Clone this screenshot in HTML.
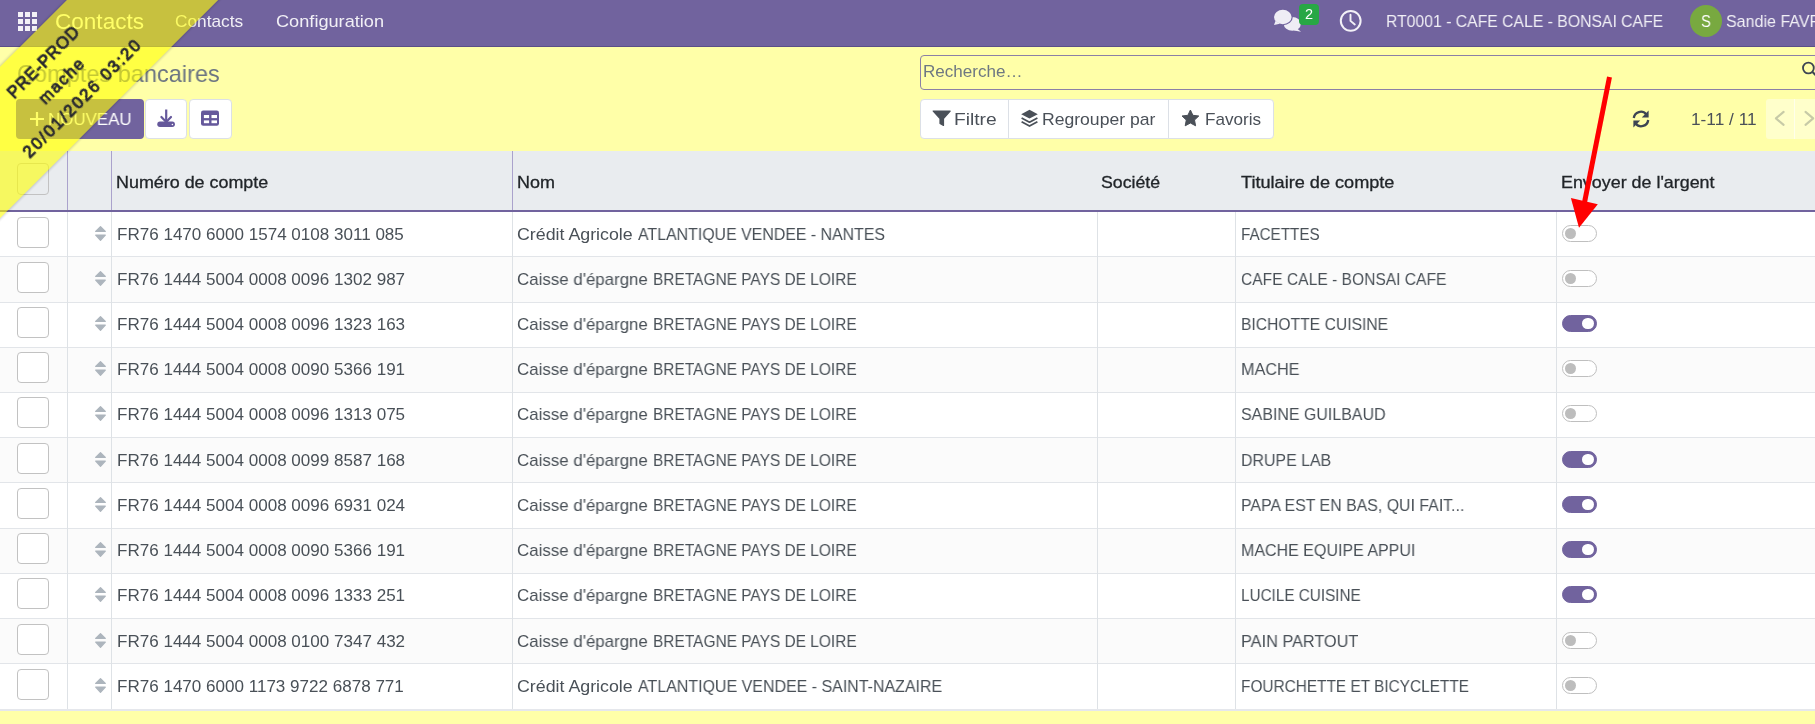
<!DOCTYPE html>
<html><head><meta charset="utf-8">
<style>
html,body{margin:0;padding:0}
body{width:1815px;height:724px;overflow:hidden;position:relative;background:#ffffa8;font-family:"Liberation Sans",sans-serif}
.abs{position:absolute}
.t{position:absolute;white-space:nowrap;line-height:1;transform-origin:0 0;will-change:transform}
.cb{position:absolute;width:30px;height:29.5px;border:1px solid #c2c2c2;border-radius:4px;background:#fff}
.tg{position:absolute;width:32.5px;height:15.5px;border:1px solid #bfbfbf;border-radius:9px;background:#fff}
.tg .kn{position:absolute;left:2.1px;top:2.15px;width:11.2px;height:11.2px;border-radius:50%;background:#bdbdbd}
.tg.on{background:#71639e;border-color:#71639e}
.tg.on .kn{left:auto;right:2px;background:#fff}
</style></head><body>
<!-- NAVBAR -->
<div class="abs" style="left:0;top:0;width:1815px;height:46px;background:#71639e;border-bottom:1px solid #5b4f88"></div>
<svg class="abs" style="left:18px;top:12px" width="19" height="19" viewBox="0 0 19 19" fill="#f3f1f7">
<rect x="0" y="0" width="5" height="5"/><rect x="7" y="0" width="5" height="5"/><rect x="14" y="0" width="5" height="5"/>
<rect x="0" y="7" width="5" height="5"/><rect x="7" y="7" width="5" height="5"/><rect x="14" y="7" width="5" height="5"/>
<rect x="0" y="14" width="5" height="5"/><rect x="7" y="14" width="5" height="5"/><rect x="14" y="14" width="5" height="5"/>
</svg>
<!-- chat icon -->
<svg class="abs" style="left:1272px;top:8px" width="32" height="26" viewBox="0 0 32 26">
<ellipse cx="20.3" cy="15.9" rx="8.5" ry="6.9" fill="#efedf5"/>
<path d="M24.5 20 L29 23.8 L22 22.6 Z" fill="#efedf5"/>
<ellipse cx="10.8" cy="9" rx="10" ry="8.3" fill="#71639e"/>
<path d="M2.6 12 L0.8 17.6 L8.5 17 Z" fill="#71639e"/>
<ellipse cx="10.8" cy="9" rx="8.8" ry="7.2" fill="#efedf5"/>
<path d="M3.6 12.8 L2 16.9 L7.8 15.8 Z" fill="#efedf5"/>
</svg>
<div class="abs" style="left:1299px;top:4px;width:20px;height:21px;background:#28a745;border-radius:4px"></div>
<!-- clock -->
<svg class="abs" style="left:1339px;top:9px" width="24" height="24" viewBox="0 0 24 24">
<circle cx="11.7" cy="11.85" r="9.9" fill="none" stroke="#f3f1f7" stroke-width="2"/>
<path d="M11.5 5.7 V11.9 L15.8 15.5" fill="none" stroke="#f3f1f7" stroke-width="1.9" stroke-linecap="round"/>
</svg>
<!-- avatar -->
<div class="abs" style="left:1690px;top:4.8px;width:32px;height:32px;border-radius:50%;background:#78a940"></div>

<!-- CONTROL PANEL -->
<div class="abs" style="left:920px;top:55px;width:1000px;height:33px;border:1px solid #8b80a6;border-radius:4px"></div>
<svg class="abs" style="left:1800px;top:59px" width="20" height="20" viewBox="0 0 20 20">
<circle cx="8.4" cy="9" r="5.4" fill="none" stroke="#3d4553" stroke-width="1.8"/>
<path d="M12.5 13 L17 17.5" stroke="#3d4553" stroke-width="2"/>
</svg>
<div class="abs" style="left:16.2px;top:99px;width:128px;height:39.6px;background:#71639e;border-radius:4px"></div>
<svg class="abs" style="left:29px;top:111px" width="16" height="16" viewBox="0 0 16 16">
<path d="M8 1 V15 M1 8 H15" stroke="#fff" stroke-width="2.2"/>
</svg>
<div class="abs" style="left:144.6px;top:99px;width:40.8px;height:37.6px;background:#fff;border:1px solid #dce0e6;border-radius:4px"></div>
<div class="abs" style="left:188.5px;top:99px;width:41.5px;height:37.5px;background:#fff;border:1px solid #dce0e6;border-radius:4px"></div>
<svg class="abs" style="left:156px;top:108px" width="20" height="20" viewBox="0 0 20 20">
<path d="M10.2 1.5 V14" stroke="#65589b" stroke-width="2.2"/>
<path d="M5.4 9 L10.2 14 L15 9" fill="none" stroke="#65589b" stroke-width="2.2" stroke-linecap="round"/>
<rect x="1.3" y="13.6" width="17.6" height="5.3" rx="2.6" fill="#65589b"/>
<circle cx="16.4" cy="16.5" r="0.8" fill="#fff"/>
</svg>
<svg class="abs" style="left:200px;top:110px" width="20" height="17" viewBox="0 0 20 17">
<rect x="1" y="0.5" width="18" height="15.2" rx="2.2" fill="#65589b"/>
<rect x="3.9" y="5" width="5.2" height="3.1" fill="#fff"/><rect x="11.5" y="5" width="5.5" height="3.1" fill="#fff"/>
<rect x="3.9" y="10.4" width="5.2" height="2.8" fill="#fff"/><rect x="11.5" y="10.4" width="5.5" height="2.8" fill="#fff"/>
</svg>
<!-- search options group -->
<div class="abs" style="left:920px;top:99px;width:351.5px;height:37.5px;background:#fff;border:1px solid #dce0e6;border-radius:4px"></div>
<div class="abs" style="left:1008px;top:100px;width:1px;height:38px;background:#dce0e6"></div>
<div class="abs" style="left:1168px;top:100px;width:1px;height:38px;background:#dce0e6"></div>
<svg class="abs" style="left:932px;top:110px" width="20" height="17" viewBox="0 0 20 17">
<path d="M1.2 1 H18.2 L11.5 8.5 V15.5 L8 13.4 V8.5 Z" fill="#4a5058" stroke="#4a5058" stroke-width="1.2" stroke-linejoin="round"/>
</svg>
<svg class="abs" style="left:1020px;top:109px" width="20" height="20" viewBox="0 0 20 20">
<path d="M9.5 0.8 L17.8 5.2 L9.5 9.6 L1.2 5.2 Z" fill="#4a5058"/>
<path d="M1.6 9 L9.5 13.2 L17.4 9" fill="none" stroke="#4a5058" stroke-width="1.8" stroke-linejoin="round"/>
<path d="M1.6 12.8 L9.5 17 L17.4 12.8" fill="none" stroke="#4a5058" stroke-width="1.8" stroke-linejoin="round"/>
</svg>
<svg class="abs" style="left:1181px;top:109px" width="20" height="19" viewBox="0 0 20 19">
<path d="M9.4 1 L11.9 6.3 L17.8 7 L13.5 11 L14.6 16.8 L9.4 14 L4.2 16.8 L5.3 11 L1 7 L6.9 6.3 Z" fill="#4a5058" stroke="#4a5058" stroke-width="1" stroke-linejoin="round"/>
</svg>
<!-- refresh -->
<svg class="abs" style="left:1630px;top:109px" width="22" height="20" viewBox="0 0 22 20">
<path d="M3.8 9 A7 7 0 0 1 16.3 5.5" fill="none" stroke="#3d4553" stroke-width="2.3"/>
<path d="M18.6 1.6 V8.4 H11.8 Z" fill="#3d4553"/>
<path d="M18.2 11 A7 7 0 0 1 5.7 14.5" fill="none" stroke="#3d4553" stroke-width="2.3"/>
<path d="M3.4 18.4 V11.6 H10.2 Z" fill="#3d4553"/>
</svg>
<div class="abs" style="left:1766.2px;top:99px;width:60px;height:39.5px;background:rgba(255,255,255,0.4);border-radius:3px"></div>
<div class="abs" style="left:1794px;top:99px;width:1px;height:39.5px;background:rgba(255,255,255,0.6)"></div>
<svg class="abs" style="left:0;top:0" width="1815" height="140">
<path d="M1783.6 111.9 L1775.9 118.4 L1783.6 124.9" fill="none" stroke="#c7caa7" stroke-width="2.1" stroke-linecap="round" stroke-linejoin="round"/>
<path d="M1805.5 111.9 L1813.2 118.4 L1805.5 124.9" fill="none" stroke="#c7caa7" stroke-width="2.1" stroke-linecap="round" stroke-linejoin="round"/>
</svg>

<!-- TABLE HEADER -->
<div class="abs" style="left:0;top:151px;width:1815px;height:59px;background:#e9ecef"></div>
<div class="abs" style="left:0;top:210px;width:1815px;height:2px;background:#71639e"></div>
<div class="abs" style="left:67px;top:151px;width:1px;height:59px;background:#aaa2cc"></div>
<div class="abs" style="left:111px;top:151px;width:1px;height:59px;background:#aaa2cc"></div>
<div class="abs" style="left:512px;top:151px;width:1px;height:59px;background:#aaa2cc"></div>
<div class="abs" style="left:17px;top:163.3px;width:30px;height:29.5px;border:1px solid #c2c2c2;border-radius:4px;background:#e9ecef"></div>
<div class="abs" style="left:0;top:212px;width:1815px;height:44px;background:#ffffff"></div>
<div class="abs" style="left:0;top:256px;width:1815px;height:1px;background:#e2e5e9"></div>
<div class="cb" style="left:17px;top:216.65px"></div>
<svg class="abs" style="left:94px;top:224.7px" width="13" height="17" viewBox="0 0 13 17"><path d="M6.5 1.6 L11.3 6.4 H1.7 Z M6.5 15.2 L11.3 10.1 H1.7 Z" fill="#adb5bd" stroke="#adb5bd" stroke-width="1.3" stroke-linejoin="round"/></svg>
<div class="tg" style="left:1562px;top:224.5px"><div class="kn"></div></div>
<div class="abs" style="left:0;top:257px;width:1815px;height:45px;background:#fbfbfb"></div>
<div class="abs" style="left:0;top:302px;width:1815px;height:1px;background:#e2e5e9"></div>
<div class="cb" style="left:17px;top:261.65px"></div>
<svg class="abs" style="left:94px;top:269.7px" width="13" height="17" viewBox="0 0 13 17"><path d="M6.5 1.6 L11.3 6.4 H1.7 Z M6.5 15.2 L11.3 10.1 H1.7 Z" fill="#adb5bd" stroke="#adb5bd" stroke-width="1.3" stroke-linejoin="round"/></svg>
<div class="tg" style="left:1562px;top:269.5px"><div class="kn"></div></div>
<div class="abs" style="left:0;top:303px;width:1815px;height:44px;background:#ffffff"></div>
<div class="abs" style="left:0;top:347px;width:1815px;height:1px;background:#e2e5e9"></div>
<div class="cb" style="left:17px;top:306.65px"></div>
<svg class="abs" style="left:94px;top:314.7px" width="13" height="17" viewBox="0 0 13 17"><path d="M6.5 1.6 L11.3 6.4 H1.7 Z M6.5 15.2 L11.3 10.1 H1.7 Z" fill="#adb5bd" stroke="#adb5bd" stroke-width="1.3" stroke-linejoin="round"/></svg>
<div class="tg on" style="left:1562px;top:314.5px"><div class="kn"></div></div>
<div class="abs" style="left:0;top:348px;width:1815px;height:44px;background:#fbfbfb"></div>
<div class="abs" style="left:0;top:392px;width:1815px;height:1px;background:#e2e5e9"></div>
<div class="cb" style="left:17px;top:351.65px"></div>
<svg class="abs" style="left:94px;top:359.7px" width="13" height="17" viewBox="0 0 13 17"><path d="M6.5 1.6 L11.3 6.4 H1.7 Z M6.5 15.2 L11.3 10.1 H1.7 Z" fill="#adb5bd" stroke="#adb5bd" stroke-width="1.3" stroke-linejoin="round"/></svg>
<div class="tg" style="left:1562px;top:359.5px"><div class="kn"></div></div>
<div class="abs" style="left:0;top:393px;width:1815px;height:44px;background:#ffffff"></div>
<div class="abs" style="left:0;top:437px;width:1815px;height:1px;background:#e2e5e9"></div>
<div class="cb" style="left:17px;top:396.65px"></div>
<svg class="abs" style="left:94px;top:404.7px" width="13" height="17" viewBox="0 0 13 17"><path d="M6.5 1.6 L11.3 6.4 H1.7 Z M6.5 15.2 L11.3 10.1 H1.7 Z" fill="#adb5bd" stroke="#adb5bd" stroke-width="1.3" stroke-linejoin="round"/></svg>
<div class="tg" style="left:1562px;top:404.5px"><div class="kn"></div></div>
<div class="abs" style="left:0;top:438px;width:1815px;height:44px;background:#fbfbfb"></div>
<div class="abs" style="left:0;top:482px;width:1815px;height:1px;background:#e2e5e9"></div>
<div class="cb" style="left:17px;top:442.65px"></div>
<svg class="abs" style="left:94px;top:450.7px" width="13" height="17" viewBox="0 0 13 17"><path d="M6.5 1.6 L11.3 6.4 H1.7 Z M6.5 15.2 L11.3 10.1 H1.7 Z" fill="#adb5bd" stroke="#adb5bd" stroke-width="1.3" stroke-linejoin="round"/></svg>
<div class="tg on" style="left:1562px;top:450.5px"><div class="kn"></div></div>
<div class="abs" style="left:0;top:483px;width:1815px;height:45px;background:#ffffff"></div>
<div class="abs" style="left:0;top:528px;width:1815px;height:1px;background:#e2e5e9"></div>
<div class="cb" style="left:17px;top:487.65px"></div>
<svg class="abs" style="left:94px;top:495.7px" width="13" height="17" viewBox="0 0 13 17"><path d="M6.5 1.6 L11.3 6.4 H1.7 Z M6.5 15.2 L11.3 10.1 H1.7 Z" fill="#adb5bd" stroke="#adb5bd" stroke-width="1.3" stroke-linejoin="round"/></svg>
<div class="tg on" style="left:1562px;top:495.5px"><div class="kn"></div></div>
<div class="abs" style="left:0;top:529px;width:1815px;height:44px;background:#fbfbfb"></div>
<div class="abs" style="left:0;top:573px;width:1815px;height:1px;background:#e2e5e9"></div>
<div class="cb" style="left:17px;top:532.65px"></div>
<svg class="abs" style="left:94px;top:540.7px" width="13" height="17" viewBox="0 0 13 17"><path d="M6.5 1.6 L11.3 6.4 H1.7 Z M6.5 15.2 L11.3 10.1 H1.7 Z" fill="#adb5bd" stroke="#adb5bd" stroke-width="1.3" stroke-linejoin="round"/></svg>
<div class="tg on" style="left:1562px;top:540.5px"><div class="kn"></div></div>
<div class="abs" style="left:0;top:574px;width:1815px;height:44px;background:#ffffff"></div>
<div class="abs" style="left:0;top:618px;width:1815px;height:1px;background:#e2e5e9"></div>
<div class="cb" style="left:17px;top:577.65px"></div>
<svg class="abs" style="left:94px;top:585.7px" width="13" height="17" viewBox="0 0 13 17"><path d="M6.5 1.6 L11.3 6.4 H1.7 Z M6.5 15.2 L11.3 10.1 H1.7 Z" fill="#adb5bd" stroke="#adb5bd" stroke-width="1.3" stroke-linejoin="round"/></svg>
<div class="tg on" style="left:1562px;top:585.5px"><div class="kn"></div></div>
<div class="abs" style="left:0;top:619px;width:1815px;height:44px;background:#fbfbfb"></div>
<div class="abs" style="left:0;top:663px;width:1815px;height:1px;background:#e2e5e9"></div>
<div class="cb" style="left:17px;top:623.65px"></div>
<svg class="abs" style="left:94px;top:631.7px" width="13" height="17" viewBox="0 0 13 17"><path d="M6.5 1.6 L11.3 6.4 H1.7 Z M6.5 15.2 L11.3 10.1 H1.7 Z" fill="#adb5bd" stroke="#adb5bd" stroke-width="1.3" stroke-linejoin="round"/></svg>
<div class="tg" style="left:1562px;top:631.5px"><div class="kn"></div></div>
<div class="abs" style="left:0;top:664px;width:1815px;height:45px;background:#ffffff"></div>
<div class="abs" style="left:0;top:709px;width:1815px;height:1px;background:#e2e5e9"></div>
<div class="cb" style="left:17px;top:668.65px"></div>
<svg class="abs" style="left:94px;top:676.7px" width="13" height="17" viewBox="0 0 13 17"><path d="M6.5 1.6 L11.3 6.4 H1.7 Z M6.5 15.2 L11.3 10.1 H1.7 Z" fill="#adb5bd" stroke="#adb5bd" stroke-width="1.3" stroke-linejoin="round"/></svg>
<div class="tg" style="left:1562px;top:676.5px"><div class="kn"></div></div>
<div class="abs" style="left:67px;top:212px;width:1px;height:498px;background:#dee2e6"></div>
<div class="abs" style="left:111px;top:212px;width:1px;height:498px;background:#dee2e6"></div>
<div class="abs" style="left:512px;top:212px;width:1px;height:498px;background:#dee2e6"></div>
<div class="abs" style="left:1097px;top:212px;width:1px;height:498px;background:#dee2e6"></div>
<div class="abs" style="left:1235px;top:212px;width:1px;height:498px;background:#dee2e6"></div>
<div class="abs" style="left:1556px;top:212px;width:1px;height:498px;background:#dee2e6"></div>
<div class="abs" style="left:0;top:709px;width:1815px;height:2px;background:#e5e7ec"></div>
<div class="t" style="left:54.70px;top:10.95px;font-size:22.5px;color:#ffffff;transform:scaleX(1.0023);">Contacts</div>
<div class="t" style="left:175.48px;top:12.61px;font-size:17px;color:rgba(255,255,255,0.9);transform:scaleX(1.0167);">Contacts</div>
<div class="t" style="left:275.93px;top:12.61px;font-size:17px;color:rgba(255,255,255,0.9);transform:scaleX(1.0687);">Configuration</div>
<div class="t" style="left:1386.47px;top:12.61px;font-size:17px;color:rgba(255,255,255,0.9);transform:scaleX(0.9265);">RT0001 - CAFE CALE - BONSAI CAFE</div>
<div class="t" style="left:1725.56px;top:12.61px;font-size:17px;color:rgba(255,255,255,0.9);transform:scaleX(0.9430);">Sandie FAVRE</div>
<div class="t" style="left:17.02px;top:61.68px;font-size:24px;color:#6b7482;transform:scaleX(0.9805);">Comptes bancaires</div>
<div class="t" style="left:923.30px;top:62.61px;font-size:17px;color:#6e7882;transform:scaleX(1.0042);">Recherche…</div>
<div class="t" style="left:48.01px;top:110.61px;font-size:17px;color:#ffffff;transform:scaleX(0.9939);">NOUVEAU</div>
<div class="t" style="left:953.57px;top:110.61px;font-size:17px;color:#4a5058;transform:scaleX(1.1306);">Filtre</div>
<div class="t" style="left:1041.97px;top:110.61px;font-size:17px;color:#4a5058;transform:scaleX(1.0339);">Regrouper par</div>
<div class="t" style="left:1204.79px;top:110.61px;font-size:17px;color:#4a5058;transform:scaleX(1.0074);">Favoris</div>
<div class="t" style="left:1690.98px;top:110.61px;font-size:17px;color:#4a5058;transform:scaleX(1.0159);">1-11 / 11</div>
<div class="t" style="left:116.05px;top:173.61px;font-size:17px;color:#212529;transform:scaleX(1.0531);-webkit-text-stroke:0.3px #212529;">Numéro de compte</div>
<div class="t" style="left:517.24px;top:173.61px;font-size:17px;color:#212529;transform:scaleX(1.0559);-webkit-text-stroke:0.3px #212529;">Nom</div>
<div class="t" style="left:1101.46px;top:173.61px;font-size:17px;color:#212529;transform:scaleX(1.0418);-webkit-text-stroke:0.3px #212529;">Société</div>
<div class="t" style="left:1240.90px;top:173.61px;font-size:17px;color:#212529;transform:scaleX(1.0660);-webkit-text-stroke:0.3px #212529;">Titulaire de compte</div>
<div class="t" style="left:1561.35px;top:173.61px;font-size:17px;color:#212529;transform:scaleX(1.0517);-webkit-text-stroke:0.3px #212529;">Envoyer de l'argent</div>
<div class="t" style="left:116.60px;top:225.61px;font-size:17px;color:#495057;transform:scaleX(1.0025);">FR76 1470 6000 1574 0108 3011 085</div>
<div class="t" style="left:517.25px;top:225.61px;font-size:17px;color:#495057;transform:scaleX(1.0468);">Crédit Agricole</div>
<div class="t" style="left:637.50px;top:225.61px;font-size:17px;color:#495057;transform:scaleX(0.9352);">ATLANTIQUE VENDEE - NANTES</div>
<div class="t" style="left:1240.70px;top:225.61px;font-size:17px;color:#495057;transform:scaleX(0.8953);">FACETTES</div>
<div class="t" style="left:116.60px;top:270.61px;font-size:17px;color:#495057;transform:scaleX(1.0025);">FR76 1444 5004 0008 0096 1302 987</div>
<div class="t" style="left:517.31px;top:270.61px;font-size:17px;color:#495057;transform:scaleX(0.9931);">Caisse d'épargne</div>
<div class="t" style="left:652.79px;top:270.61px;font-size:17px;color:#495057;transform:scaleX(0.9099);">BRETAGNE PAYS DE LOIRE</div>
<div class="t" style="left:1240.68px;top:270.61px;font-size:17px;color:#495057;transform:scaleX(0.9176);">CAFE CALE - BONSAI CAFE</div>
<div class="t" style="left:116.60px;top:315.61px;font-size:17px;color:#495057;transform:scaleX(1.0025);">FR76 1444 5004 0008 0096 1323 163</div>
<div class="t" style="left:517.31px;top:315.61px;font-size:17px;color:#495057;transform:scaleX(0.9931);">Caisse d'épargne</div>
<div class="t" style="left:652.79px;top:315.61px;font-size:17px;color:#495057;transform:scaleX(0.9099);">BRETAGNE PAYS DE LOIRE</div>
<div class="t" style="left:1240.68px;top:315.61px;font-size:17px;color:#495057;transform:scaleX(0.9215);">BICHOTTE CUISINE</div>
<div class="t" style="left:116.60px;top:360.61px;font-size:17px;color:#495057;transform:scaleX(1.0025);">FR76 1444 5004 0008 0090 5366 191</div>
<div class="t" style="left:517.31px;top:360.61px;font-size:17px;color:#495057;transform:scaleX(0.9931);">Caisse d'épargne</div>
<div class="t" style="left:652.79px;top:360.61px;font-size:17px;color:#495057;transform:scaleX(0.9099);">BRETAGNE PAYS DE LOIRE</div>
<div class="t" style="left:1240.65px;top:360.61px;font-size:17px;color:#495057;transform:scaleX(0.9533);">MACHE</div>
<div class="t" style="left:116.60px;top:405.61px;font-size:17px;color:#495057;transform:scaleX(1.0025);">FR76 1444 5004 0008 0096 1313 075</div>
<div class="t" style="left:517.31px;top:405.61px;font-size:17px;color:#495057;transform:scaleX(0.9931);">Caisse d'épargne</div>
<div class="t" style="left:652.79px;top:405.61px;font-size:17px;color:#495057;transform:scaleX(0.9099);">BRETAGNE PAYS DE LOIRE</div>
<div class="t" style="left:1240.66px;top:405.61px;font-size:17px;color:#495057;transform:scaleX(0.9388);">SABINE GUILBAUD</div>
<div class="t" style="left:116.60px;top:451.61px;font-size:17px;color:#495057;transform:scaleX(1.0025);">FR76 1444 5004 0008 0099 8587 168</div>
<div class="t" style="left:517.31px;top:451.61px;font-size:17px;color:#495057;transform:scaleX(0.9931);">Caisse d'épargne</div>
<div class="t" style="left:652.79px;top:451.61px;font-size:17px;color:#495057;transform:scaleX(0.9099);">BRETAGNE PAYS DE LOIRE</div>
<div class="t" style="left:1240.66px;top:451.61px;font-size:17px;color:#495057;transform:scaleX(0.9358);">DRUPE LAB</div>
<div class="t" style="left:116.60px;top:496.61px;font-size:17px;color:#495057;transform:scaleX(1.0025);">FR76 1444 5004 0008 0096 6931 024</div>
<div class="t" style="left:517.31px;top:496.61px;font-size:17px;color:#495057;transform:scaleX(0.9931);">Caisse d'épargne</div>
<div class="t" style="left:652.79px;top:496.61px;font-size:17px;color:#495057;transform:scaleX(0.9099);">BRETAGNE PAYS DE LOIRE</div>
<div class="t" style="left:1240.67px;top:496.61px;font-size:17px;color:#495057;transform:scaleX(0.9346);">PAPA EST EN BAS, QUI FAIT...</div>
<div class="t" style="left:116.60px;top:541.61px;font-size:17px;color:#495057;transform:scaleX(1.0025);">FR76 1444 5004 0008 0090 5366 191</div>
<div class="t" style="left:517.31px;top:541.61px;font-size:17px;color:#495057;transform:scaleX(0.9931);">Caisse d'épargne</div>
<div class="t" style="left:652.79px;top:541.61px;font-size:17px;color:#495057;transform:scaleX(0.9099);">BRETAGNE PAYS DE LOIRE</div>
<div class="t" style="left:1240.66px;top:541.61px;font-size:17px;color:#495057;transform:scaleX(0.9415);">MACHE EQUIPE APPUI</div>
<div class="t" style="left:116.60px;top:586.61px;font-size:17px;color:#495057;transform:scaleX(1.0025);">FR76 1444 5004 0008 0096 1333 251</div>
<div class="t" style="left:517.31px;top:586.61px;font-size:17px;color:#495057;transform:scaleX(0.9931);">Caisse d'épargne</div>
<div class="t" style="left:652.79px;top:586.61px;font-size:17px;color:#495057;transform:scaleX(0.9099);">BRETAGNE PAYS DE LOIRE</div>
<div class="t" style="left:1240.70px;top:586.61px;font-size:17px;color:#495057;transform:scaleX(0.8992);">LUCILE CUISINE</div>
<div class="t" style="left:116.60px;top:632.61px;font-size:17px;color:#495057;transform:scaleX(1.0025);">FR76 1444 5004 0008 0100 7347 432</div>
<div class="t" style="left:517.31px;top:632.61px;font-size:17px;color:#495057;transform:scaleX(0.9931);">Caisse d'épargne</div>
<div class="t" style="left:652.79px;top:632.61px;font-size:17px;color:#495057;transform:scaleX(0.9099);">BRETAGNE PAYS DE LOIRE</div>
<div class="t" style="left:1240.64px;top:632.61px;font-size:17px;color:#495057;transform:scaleX(0.9587);">PAIN PARTOUT</div>
<div class="t" style="left:116.60px;top:677.61px;font-size:17px;color:#495057;transform:scaleX(1.0025);">FR76 1470 6000 1173 9722 6878 771</div>
<div class="t" style="left:517.25px;top:677.61px;font-size:17px;color:#495057;transform:scaleX(1.0468);">Crédit Agricole</div>
<div class="t" style="left:637.50px;top:677.61px;font-size:17px;color:#495057;transform:scaleX(0.9399);">ATLANTIQUE VENDEE - SAINT-NAZAIRE</div>
<div class="t" style="left:1240.69px;top:677.61px;font-size:17px;color:#495057;transform:scaleX(0.9052);">FOURCHETTE ET BICYCLETTE</div>
<div class="t" style="left:1305px;top:6.9px;font-size:14.5px;color:#fff">2</div>
<div class="t" style="left:1701.3px;top:12.9px;font-size:17px;color:#fff;transform:scaleX(0.86)">S</div>
<!-- RIBBON -->
<div class="abs" style="left:-228.9px;top:17.7px;width:600px;height:106.8px;background:rgba(255,255,0,0.6);transform:rotate(-45deg);box-shadow:0 0 3px rgba(0,0,0,0.3);color:#26262e;font-size:16.5px;line-height:1;-webkit-text-stroke:0.9px #26262e">
 <div class="t" style="left:239.5px;top:18.9px;letter-spacing:0.93px">PRE-PROD</div>
 <div class="t" style="left:258px;top:44.7px;letter-spacing:1.75px">mache</div>
 <div class="t" style="left:209px;top:71.6px;letter-spacing:2px">20/01/2026 03:20</div>
</div>
<!-- ARROW -->
<svg class="abs" style="left:0;top:0" width="1815" height="724">
<path d="M1609.5 77 L1584 205" stroke="#ff0000" stroke-width="5" stroke-linecap="butt"/>
<path d="M1570.9 198.1 L1597.8 204.2 L1579 227.8 Z" fill="#ff0000"/>
</svg>
</body></html>
